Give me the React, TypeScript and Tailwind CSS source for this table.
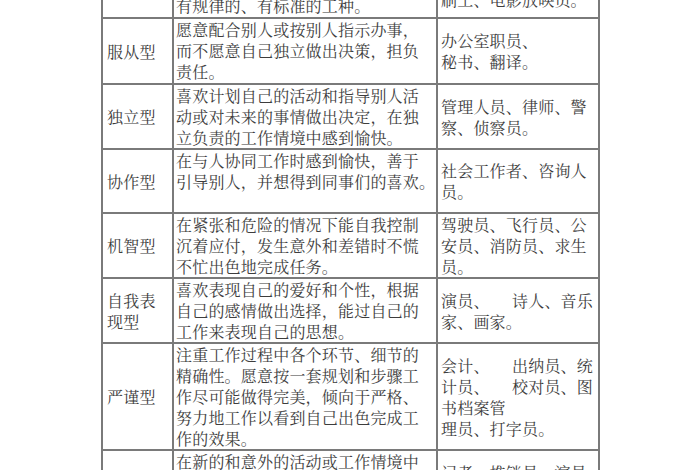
import React from 'react';

type Row = {
  label: string[];
  desc: string[];
  jobs: (string | [string, string])[];
  h: number;
};

const rows: Row[] = [
  {
    label: ['服从型'],
    desc: ['愿意配合别人或按别人指示办事，', '而不愿意自己独立做出决策，担负', '责任。'],
    jobs: ['办公室职员、', '秘书、翻译。'],
    h: 66,
  },
  {
    label: ['独立型'],
    desc: ['喜欢计划自己的活动和指导别人活', '动或对未来的事情做出决定，在独', '立负责的工作情境中感到愉快。'],
    jobs: ['管理人员、律师、警', '察、侦察员。'],
    h: 65,
  },
  {
    label: ['协作型'],
    desc: ['在与人协同工作时感到愉快，善于', '引导别人，并想得到同事们的喜欢。'],
    jobs: ['社会工作者、咨询人', '员。'],
    h: 64,
  },
  {
    label: ['机智型'],
    desc: ['在紧张和危险的情况下能自我控制', '沉着应付，发生意外和差错时不慌', '不忙出色地完成任务。'],
    jobs: ['驾驶员、飞行员、公', '安员、消防员、求生', '员。'],
    h: 65,
  },
  {
    label: ['自我表', '现型'],
    desc: ['喜欢表现自己的爱好和个性，根据', '自己的感情做出选择，能过自己的', '工作来表现自己的思想。'],
    jobs: [['演员、', '诗人、音乐'], '家、画家。'],
    h: 65,
  },
  {
    label: ['严谨型'],
    desc: [
      '注重工作过程中各个环节、细节的',
      '精确性。愿意按一套规划和步骤工',
      '作尽可能做得完美，倾向于严格、',
      '努力地工作以看到自己出色完成工',
      '作的效果。',
    ],
    jobs: [['会计、', '出纳员、统'], ['计员、', '校对员、图'], '书档案管', '理员、打字员。'],
    h: 107,
  },
];

const Lines: React.FC<{ items: (string | [string, string])[] }> = ({ items }) => (
  <>
    {items.map((t, i) =>
      typeof t === 'string' ? (
        <div key={i} className="whitespace-nowrap">{t}</div>
      ) : (
        <div key={i} className="flex justify-between whitespace-nowrap">
          <span>{t[0]}</span>
          <span>{t[1]}</span>
        </div>
      )
    )}
  </>
);

const cell = 'border-2 border-[#7a7a7a]';

export default function App() {
  return (
    <div
      className="w-[700px] h-[470px] overflow-hidden bg-white text-[#3d3d3d] text-[16px] leading-[21px] tracking-[0.2px]"
      style={{ fontFamily: '"Noto Serif CJK SC", "Noto Sans CJK SC", serif' }}
    >
      <table className="table-fixed border-collapse ml-[101px] mt-[-24px] w-[497px]">
        <colgroup>
          <col className="w-[71px]" />
          <col className="w-[264px]" />
          <col className="w-[162px]" />
        </colgroup>
        <tbody>
          <tr>
            <td className={`${cell} h-[41px]`}></td>
            <td className={`${cell} align-bottom pl-[2px] pb-[1px]`}>
              <div className="whitespace-nowrap">有规律的、有标准的工种。</div>
            </td>
            <td className={`${cell} align-bottom pl-[3px] pb-[7px]`}>
              <div className="whitespace-nowrap">刷工、电影放映员。</div>
            </td>
          </tr>
          {rows.map((r, i) => (
            <tr key={i}>
              <td className={`${cell} align-middle pl-[4px]`} style={{ height: r.h }}>
                <Lines items={r.label} />
              </td>
              <td className={`${cell} align-top pl-[2px] pt-0`}>
                <Lines items={r.desc} />
              </td>
              <td className={`${cell} align-middle pl-[3px] pr-[5px]`}>
                <Lines items={r.jobs} />
              </td>
            </tr>
          ))}
          <tr>
            <td className={`${cell} align-middle pl-[4px] h-[110px]`}>
              <Lines items={['变化型']} />
            </td>
            <td className={`${cell} align-top pl-[2px]`}>
              <Lines items={['在新的和意外的活动或工作情境中', '感到愉快，喜欢有变化的工作。']} />
            </td>
            <td className={`${cell} align-top pl-[3px] pt-[11px]`}>
              <Lines items={['记者、推销员、演员。']} />
            </td>
          </tr>
        </tbody>
      </table>
    </div>
  );
}
